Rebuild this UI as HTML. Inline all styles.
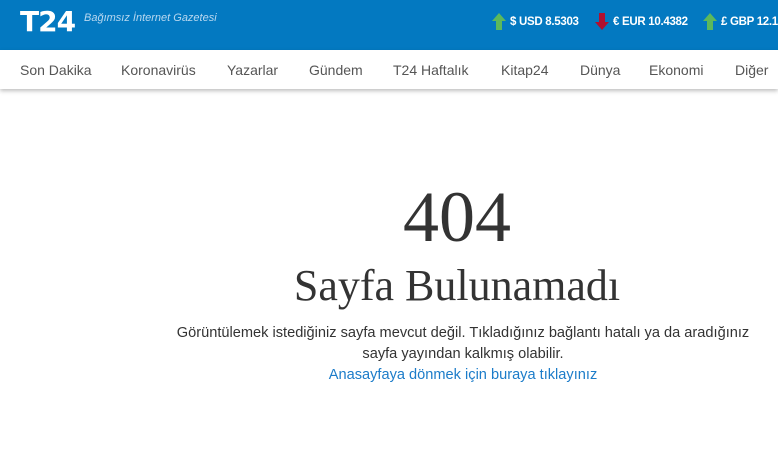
<!DOCTYPE html>
<html><head><meta charset="utf-8"><style>
*{margin:0;padding:0;box-sizing:border-box}
body{width:778px;height:462px;overflow:hidden;background:#fff;font-family:"Liberation Sans",Arial,sans-serif;position:relative}
.top{position:absolute;left:0;top:0;width:778px;height:50px;background:#0379c1}
.logo{position:absolute;left:20px;top:5px;color:#fff;font-weight:bold;font-size:28px;letter-spacing:-1px;font-family:"DejaVu Sans","Liberation Sans",sans-serif}
.tag{position:absolute;left:84px;top:12px;color:#b9d8f0;font-size:11px;font-style:italic}
.cur{position:absolute;top:13px;color:#fff;font-size:11.5px;letter-spacing:-0.3px;font-weight:bold;white-space:nowrap;display:flex;align-items:center}
.cur svg{margin-right:4px}
.nav{position:absolute;left:0;top:50px;width:778px;height:39px;background:#fff;box-shadow:0 2px 4px rgba(0,0,0,.25)}
.nav span{position:absolute;top:12px;font-size:14px;color:#555}
.c{position:absolute;left:142px;width:630px;text-align:center}
.h1{top:176px;font-family:"Liberation Serif",serif;font-size:72px;color:#333}
.h2{top:260px;font-family:"Liberation Serif",serif;font-size:44px;color:#333}
.p{left:148px;top:323px;font-size:14.6px;line-height:21px;color:#333}
.p a{color:#1c7cc9;text-decoration:none}
</style></head><body>
<div class="top">
<div class="logo">T24</div>
<div class="tag">Bağımsız İnternet Gazetesi</div>
<div class="cur" style="left:492px"><svg width="14" height="17" viewBox="0 0 14 17"><path d="M7 0L14 8H10V17H4V8H0Z" fill="#5cb85c"/></svg>$ USD 8.5303</div>
<div class="cur" style="left:595px"><svg width="14" height="17" viewBox="0 0 14 17"><path d="M7 17L14 9H10V0H4V9H0Z" fill="#b01030"/></svg>€ EUR 10.4382</div>
<div class="cur" style="left:703px"><svg width="14" height="17" viewBox="0 0 14 17"><path d="M7 0L14 8H10V17H4V8H0Z" fill="#5cb85c"/></svg>£ GBP 12.10</div>
</div>
<div class="nav">
<span style="left:20px">Son Dakika</span>
<span style="left:121px">Koronavirüs</span>
<span style="left:227px">Yazarlar</span>
<span style="left:309px">Gündem</span>
<span style="left:393px">T24 Haftalık</span>
<span style="left:501px">Kitap24</span>
<span style="left:580px">Dünya</span>
<span style="left:649px">Ekonomi</span>
<span style="left:735px">Diğer</span>
</div>
<div class="c h1">404</div>
<div class="c h2">Sayfa Bulunamadı</div>
<div class="c p">Görüntülemek istediğiniz sayfa mevcut değil. Tıkladığınız bağlantı hatalı ya da aradığınız<br>sayfa yayından kalkmış olabilir.<br><a>Anasayfaya dönmek için buraya tıklayınız</a></div>
</body></html>
